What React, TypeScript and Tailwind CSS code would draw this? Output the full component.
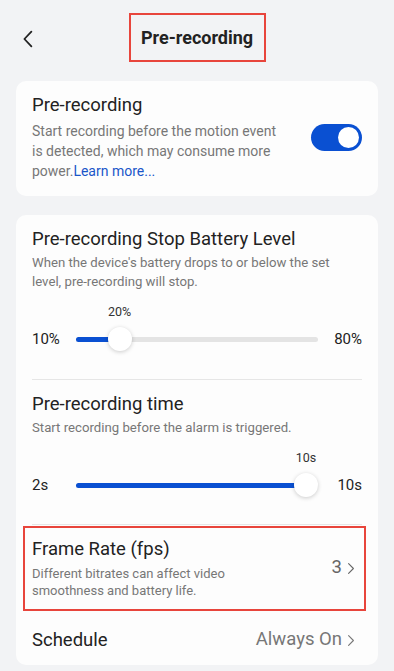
import React from 'react';

function Chevron({ className, left }: { className?: string; left?: boolean }) {
  return (
    <svg viewBox="0 0 10 16" className={className} fill="none" stroke="currentColor" strokeWidth={1.4} strokeLinecap="round" strokeLinejoin="round">
      <path d={left ? 'M8 1.5L1.8 8 8 14.5' : 'M2 2l6 6-6 6'} />
    </svg>
  );
}

function Slider({ min, max, label, pct }: { min: string; max: string; label: string; pct: number }) {
  return (
    <div className="mt-[13px]">
      <div className="flex h-4">
        <div className="w-[44px] shrink-0" />
        <div className="relative flex-1">
          <span className="absolute top-0 -translate-x-1/2 text-[12.5px] leading-4 text-[#333]" style={{ left: `${pct}%` }}>{label}</span>
        </div>
        <div className="w-[44px] shrink-0" />
      </div>
      <div className="mt-[7px] flex h-6 items-center">
        <span className="w-[44px] shrink-0 text-[15px] text-[#222]">{min}</span>
        <div className="relative h-[5px] flex-1 rounded-full bg-[#e4e4e4]">
          <div className="absolute left-0 top-0 h-full rounded-full bg-[#0a50d2]" style={{ width: `${pct}%` }} />
          <div className="absolute top-1/2 h-6 w-6 -translate-x-1/2 -translate-y-1/2 rounded-full bg-white shadow-[0_1px_4px_rgba(0,0,0,0.2)]" style={{ left: `${pct}%` }} />
        </div>
        <span className="w-[44px] shrink-0 text-right text-[15px] text-[#222]">{max}</span>
      </div>
    </div>
  );
}

export default function App() {
  return (
    <div className="min-h-[671px] w-[394px] bg-[#f2f3f5] px-4 font-['Roboto',sans-serif] text-[#222]">
      {/* header */}
      <div className="relative flex h-[81px] justify-center pt-[13px]">
        <Chevron left className="absolute left-[6px] top-[30px] h-[18px] w-[12px] text-[#222] [stroke-width:1.6]" />
        <div className="flex h-[49px] w-[137px] items-center justify-center border-2 border-[#e8453c]">
          <span className="text-[18px] font-bold">Pre-recording</span>
        </div>
      </div>

      {/* card 1 */}
      <div className="flex items-center rounded-[10px] bg-[#fdfdfd] px-4 pb-[15px] pt-3">
        <div className="flex-1">
          <div className="text-[18.5px] leading-6">Pre-recording</div>
          <p className="mt-1 w-[252px] text-[14px] leading-5 text-[#777]">
            Start recording before the motion event is detected, which may consume more power.<span className="text-[#1a56c9]">Learn more...</span>
          </p>
        </div>
        <div className="flex h-[27px] w-[51px] items-center justify-end rounded-full bg-[#0a50d2] px-[3px]">
          <div className="h-[21px] w-[21px] rounded-full bg-white" />
        </div>
      </div>

      {/* card 2 */}
      <div className="mt-[19px] rounded-[10px] bg-[#fdfdfd] px-4 pt-3">
        <div className="text-[18.5px] leading-6">Pre-recording Stop Battery Level</div>
        <p className="mt-[2px] w-[305px] text-[13.2px] leading-[19px] text-[#777]">
          When the device's battery drops to or below the set level, pre-recording will stop.
        </p>
        <Slider min="10%" max="80%" label="20%" pct={18} />
        <div className="mt-[28px] h-px bg-[#e6e6e6]" />

        <div className="mt-3 text-[18.5px] leading-6">Pre-recording time</div>
        <p className="mt-[2px] text-[13.2px] leading-[19px] text-[#777]">Start recording before the alarm is triggered.</p>
        <Slider min="2s" max="10s" label="10s" pct={95} />
        <div className="mt-[27px] h-px bg-[#e6e6e6]" />

        <div className="relative flex items-center pb-3 pt-3">
          <div className="pointer-events-none absolute -left-[9px] -right-[4px] top-px bottom-0 border-2 border-[#e8453c]" />
          <div className="flex-1">
            <div className="text-[18.5px] leading-6">Frame Rate (fps)</div>
            <p className="mt-[4px] w-[240px] text-[13px] leading-[17px] text-[#777]">
              Different bitrates can affect video smoothness and battery life.
            </p>
          </div>
          <div className="mr-[7px] flex items-center gap-[5px] text-[18.5px] text-[#666]">
            <span>3</span>
            <Chevron className="h-[13px] w-[8px]" />
          </div>
        </div>

        <div className="flex h-[54px] items-center pt-1">
          <div className="flex-1 text-[18.5px] leading-6">Schedule</div>
          <div className="mr-[7px] flex items-center gap-[5px] text-[18.5px] text-[#777]">
            <span>Always On</span>
            <Chevron className="h-[13px] w-[8px]" />
          </div>
        </div>
      </div>
    </div>
  );
}
